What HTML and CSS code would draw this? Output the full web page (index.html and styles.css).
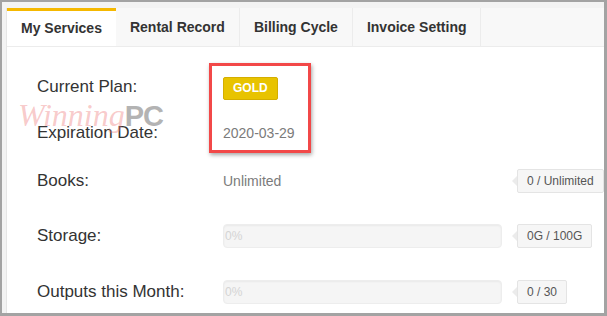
FILE: index.html
```html
<!DOCTYPE html>
<html>
<head>
<meta name="viewport" content="width=device-width, initial-scale=1">
<link rel="stylesheet" href="styles.css">
</head>
<body>
<div class="window">
  <div class="panel">
    <ul class="tabs">
      <li class="tab active">My Services</li>
      <li class="tab">Rental Record</li>
      <li class="tab">Billing Cycle</li>
      <li class="tab">Invoice Setting</li>
    </ul>

    <div class="services">
      <div class="label">Current Plan:</div>
      <div class="value"><span class="plan">GOLD</span></div>
      <div></div>

      <div class="label">Expiration Date:</div>
      <div class="value">2020-03-29</div>
      <div></div>

      <div class="label">Books:</div>
      <div class="value">Unlimited</div>
      <div><span class="count">0 / Unlimited</span></div>

      <div class="label">Storage:</div>
      <div class="value"><div class="progress"><span class="progress-text">0%</span></div></div>
      <div><span class="count">0G / 100G</span></div>

      <div class="label">Outputs this Month:</div>
      <div class="value"><div class="progress"><span class="progress-text">0%</span></div></div>
      <div><span class="count">0 / 30</span></div>
    </div>

    <!-- watermark and annotation box sit over the content -->
    <div class="watermark"><span class="wm-script">Winning</span><span class="wm-pc">PC</span></div>
    <div class="highlight"></div>
  </div>
</div>
</body>
</html>
```

FILE: styles.css
```css
html, body {
  margin: 0;
  padding: 0;
}

body {
  font-family: "Liberation Sans", Arial, sans-serif;
  color: #333;
}

.window {
  width: 607px;
  height: 316px;
  box-sizing: border-box;
  border-style: solid;
  border-color: #a3a3a3;
  border-width: 2px 3px 3px 2px;
  padding: 6px 0 0 4px;
  background: #f3f3f3;
  overflow: hidden;
}

.panel {
  position: relative;
  height: 100%;
  background: #fff;
  border-left: 1px solid #e6e6e6;
}

/* Tabs */
.tabs {
  display: flex;
  margin: 0;
  padding: 0;
  list-style: none;
  height: 38px;
  background: #f8f8f8;
  border-bottom: 1px solid #ececec;
}

.tab {
  padding: 0 14px;
  line-height: 38px;
  font-size: 14px;
  font-weight: bold;
  color: #333;
  border-right: 1px solid #ececec;
}

.tab.active {
  background: #fff;
  border-top: 3px solid #f5b800;
  line-height: 35px;
  border-right: none;
}

/* Service rows */
.services {
  display: grid;
  grid-template-columns: 171px 279px auto;
  grid-template-rows: 46px 48px 55px 56px 24px;
  column-gap: 15px;
  padding: 28px 0 0 30px;
  align-items: start;
}

.label {
  font-size: 17px;
  line-height: 24px;
  color: #333;
  white-space: nowrap;
}

.value {
  font-size: 14px;
  line-height: 24px;
  color: #7b7b7b;
}

.plan {
  display: inline-block;
  padding: 0 9px;
  height: 21px;
  line-height: 21px;
  margin-top: 1px;
  background: #e8c300;
  border: 1px solid #d4ae00;
  border-radius: 2px;
  color: #fff;
  font-size: 12px;
  font-weight: bold;
}

.progress {
  height: 22px;
  background: #f5f5f5;
  border: 1px solid #ededed;
  border-radius: 4px;
  box-shadow: inset 0 1px 2px rgba(0, 0, 0, 0.05);
}

.progress-text {
  display: block;
  padding-left: 1px;
  font-size: 12px;
  line-height: 22px;
  color: #d4d4d4;
}

.count {
  position: relative;
  display: inline-block;
  padding: 0 9px;
  height: 22px;
  line-height: 22px;
  background: #f6f6f6;
  border: 1px solid #e4e4e4;
  border-radius: 2px;
  font-size: 12px;
  color: #555;
  white-space: nowrap;
}

.count:before {
  content: "";
  position: absolute;
  left: -6px;
  top: 6px;
  border-top: 5px solid transparent;
  border-bottom: 5px solid transparent;
  border-right: 5px solid #ebebeb;
}

/* Overlays */
.watermark {
  position: absolute;
  left: 11px;
  top: 91px;
  line-height: 32px;
  white-space: nowrap;
}

.wm-script {
  font-family: "Liberation Serif", serif;
  font-style: italic;
  font-size: 32px;
  color: rgba(238, 120, 120, 0.4);
}

.wm-pc {
  font-family: "Liberation Sans", sans-serif;
  font-weight: bold;
  font-size: 29px;
  color: #b3b3b3;
  letter-spacing: -1px;
}

.highlight {
  position: absolute;
  left: 202px;
  top: 55px;
  width: 102px;
  height: 90px;
  box-sizing: border-box;
  border: 3px solid #f24848;
  box-shadow: 1px 2px 4px rgba(0, 0, 0, 0.35);
}
```
